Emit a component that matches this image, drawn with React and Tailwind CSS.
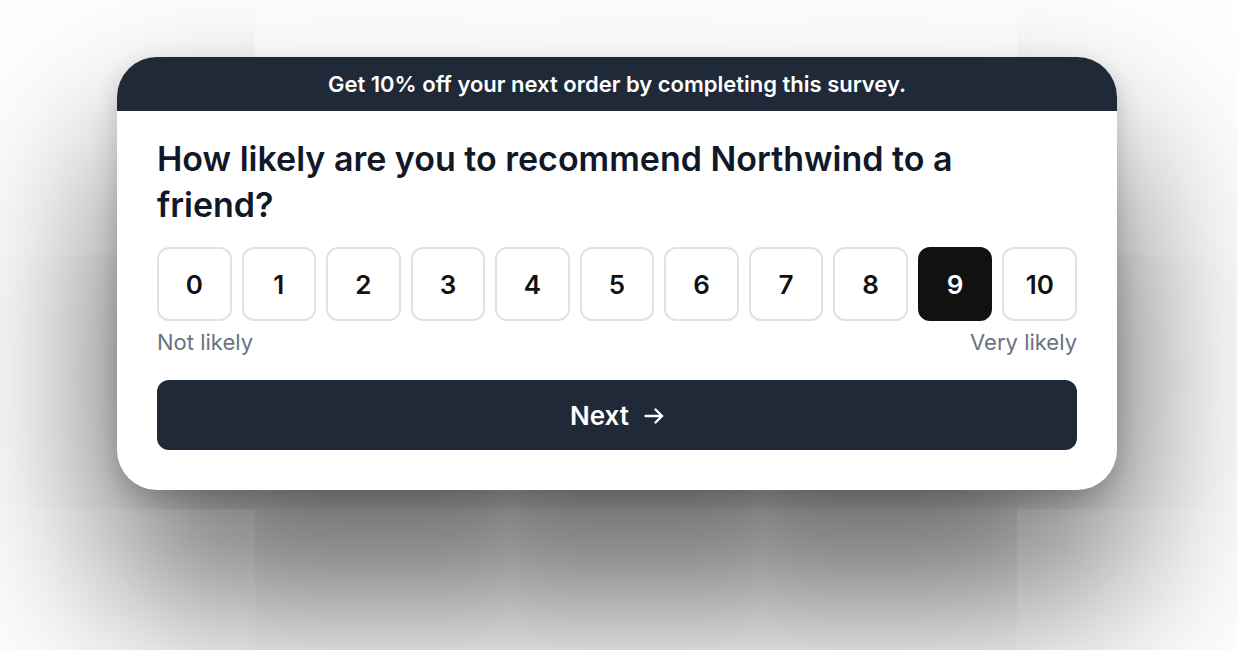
import React from "react";

export default function App() {
  const nums = [0, 1, 2, 3, 4, 5, 6, 7, 8, 9, 10];
  const selected = 9;
  return (
    <div className="min-h-screen bg-white pt-[57px] pl-[117px]" style={{ fontFamily: "Inter, 'Noto Sans', sans-serif" }}>
      <div className="w-[1000px] overflow-hidden rounded-[40px] bg-white shadow-[0_100px_180px_rgba(0,0,0,0.68),0_8px_24px_rgba(0,0,0,0.18)]">
        <div className="flex h-[54px] items-center justify-center bg-[#1f2937] text-[22px] font-semibold text-white">
          Get 10% off your next order by completing this survey.
        </div>
        <div className="px-10 pt-[25px] pb-10">
          <h1 className="text-[34px] font-semibold leading-[46px] text-[#111827]">
            How likely are you to recommend Northwind to a friend?
          </h1>
          <div className="mt-[19px] grid grid-cols-11 gap-2.5">
            {nums.map((n) => (
              <button
                key={n}
                className={
                  n === selected
                    ? "flex h-[74px] items-center justify-center rounded-xl border-2 border-[#111111] bg-[#111111] text-[26px] font-semibold text-white"
                    : "flex h-[74px] items-center justify-center rounded-xl border-2 border-[#dde1ea] bg-white text-[26px] font-semibold text-[#111111]"
                }
              >
                {n}
              </button>
            ))}
          </div>
          <div className="mt-[7px] flex justify-between text-[22px] leading-7 text-[#6b7280]">
            <span>Not likely</span>
            <span>Very likely</span>
          </div>
          <button className="mt-[24px] flex h-[70px] w-full items-center justify-center gap-[15px] rounded-xl bg-[#1f2937] text-[26px] font-semibold text-white">
            <span>Next</span>
            <svg width="20" height="16" viewBox="0 0 20 16" fill="none" stroke="currentColor" strokeWidth="2.4" strokeLinecap="round" strokeLinejoin="round" className="mt-[1px]">
              <path d="M1.5 8h16.5" />
              <path d="M11.5 1.5 18 8l-6.5 6.5" />
            </svg>
          </button>
        </div>
      </div>
    </div>
  );
}
